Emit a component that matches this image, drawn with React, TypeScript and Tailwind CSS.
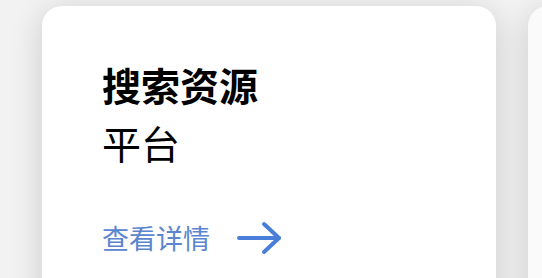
export default function App() {
  return (
    <div className="flex h-[278px] w-[542px] gap-[32px] overflow-hidden bg-[#f2f2f2] pl-[42px] pt-[6px] font-['Noto_Sans_CJK_SC',sans-serif]">
      <div className="flex h-[320px] w-[454px] shrink-0 flex-col rounded-[20px] bg-white pl-[60px] pt-[48px] shadow-[0_6px_32px_rgba(0,0,0,0.16)]">
        <h2 className="text-[39px] leading-[60px] font-bold text-black">搜索资源</h2>
        <p className="-mt-[2px] text-[39px] leading-[60px] text-black">平台</p>
        <a href="#" className="mt-[48px] flex items-center gap-[27px] text-[27px] leading-[36px] text-[#5b86cf]">
          <span>查看详情</span>
          <svg width="46" height="34" viewBox="0 0 46 34" fill="none" stroke="#4a7fd9" strokeWidth="4" strokeLinecap="round" strokeLinejoin="round">
            <path d="M2 17h40" />
            <path d="M27 3l15 14-15 14" />
          </svg>
        </a>
      </div>
      <div className="h-[320px] w-[454px] shrink-0 rounded-[20px] bg-[#fafafa] shadow-[0_6px_32px_rgba(0,0,0,0.16)]" />
    </div>
  );
}
